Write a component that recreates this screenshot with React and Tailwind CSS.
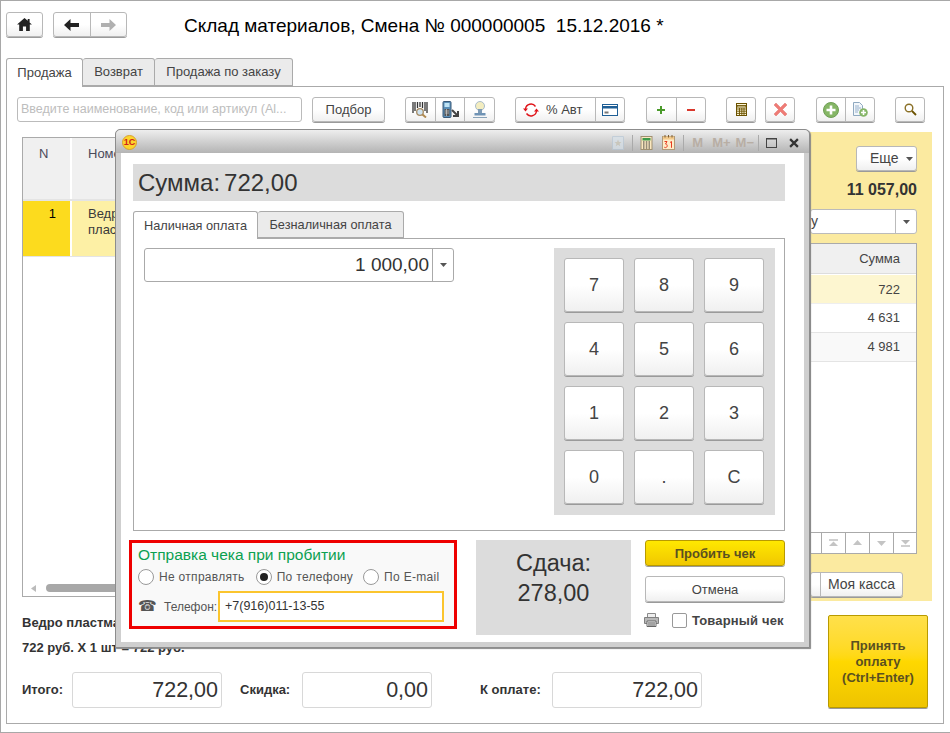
import React from "react";

const btn = "flex items-center justify-center box-border border border-[#b8b8b8] rounded-[3px] bg-linear-to-b from-white from-50% to-[#f0f0f0] shadow-[0_1px_0_#9a9a9a] text-[13px] text-[#444]";

const Sep = () => <div className="w-px self-stretch bg-[#b8b8b8]" />;
const Cell = ({ className = "", children }) => <div className={"flex items-center justify-center h-full " + className}>{children}</div>;

const Caret = () => (
  <svg width="7" height="4" viewBox="0 0 7 4"><path d="M0 0h7L3.500 4z" fill="#555" /></svg>
);

const HomeI = () => (
  <svg width="15" height="13" viewBox="0 0 16 14"><path d="M8 0 0 7h2.300v7h4V9.200h3.400V14h4V7H16l-2.500-2.200V1h-2v2L8 0z" fill="#222" /></svg>
);
const ArrowL = ({ c }) => (
  <svg width="15" height="12" viewBox="0 0 15 12"><path d="M6.500 0 0 6l6.500 6V8H15V4H6.500z" fill={c} /></svg>
);
const ArrowR = ({ c }) => (
  <svg width="15" height="12" viewBox="0 0 15 12"><path d="M8.500 0 15 6l-6.500 6V8H0V4h8.500z" fill={c} /></svg>
);
const BarcodeI = () => (
  <svg width="16" height="16" viewBox="0 0 16 16">
    <path d="M1 0v11M3 0v9M5.500 0v6M8 0v5M10.500 0v6M13 0v9M15 0v11" stroke="#333" strokeWidth="1.300" fill="none" />
    <circle cx="8" cy="10" r="3.300" fill="#cfe3f0" stroke="#a58a62" strokeWidth="1.300" />
    <path d="M10.500 12.500 14 15.500" stroke="#b08a50" strokeWidth="2" />
  </svg>
);
const TermI = () => (
  <svg width="17" height="18" viewBox="0 0 17 18">
    <rect x="1" y="0.500" width="8" height="16" rx="1" fill="#5b8fb8" stroke="#3a5a78" />
    <rect x="2.500" y="2" width="5" height="4" fill="#bfe4f5" />
    <path d="M2.500 8h5v7h-5z" fill="#555" />
    <path d="M3 10h4M3 12h4M4.500 8v7" stroke="#ddd" strokeWidth="0.600" />
    <path d="M10 9l5 5M16 10v5h-5" stroke="#444" strokeWidth="2" fill="none" />
  </svg>
);
const StampI = () => (
  <svg width="16" height="18" viewBox="0 0 16 18">
    <circle cx="8" cy="5" r="4.500" fill="#f3edc0" stroke="#a9bccb" />
    <path d="M6 8h4v4H6z" fill="#7d9ab5" />
    <path d="M2.500 12h11v2.500h-11z" fill="#6f93b5" />
    <path d="M1 16.500h14" stroke="#88a2b8" />
  </svg>
);
const RecycleI = () => (
  <svg width="16" height="14" viewBox="0 0 16 14" fill="none">
    <path d="M2.500 6A5.500 5.500 0 0 1 12.500 3.500" stroke="#e0141a" strokeWidth="1.400" />
    <path d="M13.500 8A5.500 5.500 0 0 1 3.500 10.500" stroke="#e0141a" strokeWidth="1.400" />
    <path d="M0 5.500h5L2.500 8.500zM16 8.500h-5L13.500 5.500z" fill="#e0141a" />
  </svg>
);
const CardI = () => (
  <svg width="16" height="12" viewBox="0 0 16 12">
    <rect x="0.500" y="0.500" width="15" height="11" fill="#fff" stroke="#1f5f96" />
    <rect x="1" y="2" width="14" height="2.500" fill="#1f5f96" />
    <path d="M2.500 7.500h4v2h-4z" fill="#777" />
  </svg>
);
const PlusI = () => (
  <svg width="8" height="8" viewBox="0 0 8 8"><path d="M3 0h2v3h3v2H5v3H3V5H0V3h3z" fill="#4a9a2a" /></svg>
);
const MinusI = () => (
  <svg width="8" height="2" viewBox="0 0 8 2"><path d="M0 0h8v2H0z" fill="#d9372c" /></svg>
);
const CalcI = () => (
  <svg width="11" height="13" viewBox="0 0 11 13">
    <rect x="0.500" y="0.500" width="10" height="12" fill="#fdf6d8" stroke="#6b5200" />
    <path d="M1 2.500h9v1.500H1zM1 6h9M1 8.200h9M1 10.400h9M3.500 5v7M5.800 5v7M8 5v7" stroke="#6b5200" strokeWidth="0.900" fill="none" />
  </svg>
);
const XI = () => (
  <svg width="13" height="13" viewBox="0 0 13 13"><path d="M2 0l4.500 4.500L11 0l2 2-4.500 4.500L13 11l-2 2-4.500-4.500L2 13l-2-2 4.500-4.500L0 2z" fill="#ef7b75" stroke="#d8605a" strokeWidth="0.400" /></svg>
);
const CircPlusI = () => (
  <svg width="16" height="16" viewBox="0 0 16 16">
    <circle cx="8" cy="8" r="7.500" fill="#85b665" stroke="#6f9f55" />
    <path d="M6.700 3.500h2.600v3.200h3.200v2.600H9.300v3.200H6.700V9.300H3.500V6.700h3.200z" fill="#fff" />
  </svg>
);
const DocPlusI = () => (
  <svg width="15" height="15" viewBox="0 0 15 15">
    <path d="M0.500 0.500h6l3 3v10h-9z" fill="#f3f7fb" stroke="#8fa9c0" />
    <path d="M2 4h4M2 6h6M2 8h4M2 10h3" stroke="#7f9fc0" strokeWidth="0.800" />
    <circle cx="10.500" cy="10.500" r="4.300" fill="#86b668" />
    <path d="M9.700 8h1.600v1.700H13v1.600h-1.700V13H9.700v-1.700H8V9.700h1.700z" fill="#fff" />
  </svg>
);
const SearchI = () => (
  <svg width="13" height="13" viewBox="0 0 13 13" fill="none">
    <circle cx="5" cy="5" r="3.800" stroke="#8a7026" strokeWidth="1.400" fill="#fff" />
    <path d="M8 8l4 4" stroke="#6b5200" strokeWidth="1.800" />
  </svg>
);
const StarDocI = () => (
  <svg width="12" height="14" viewBox="0 0 12 14" className="opacity-70">
    <path d="M0.500 0.500h11v13h-11z" fill="#d8e2ea" stroke="#b8c8d6" />
    <path d="M6 3.500l1 2.500h2.500L7.500 7.700l.8 2.500L6 8.800l-2.300 1.400.8-2.500L2.500 6H5z" fill="#c8c4b4" />
  </svg>
);
const CalcColorI = () => (
  <svg width="13" height="14" viewBox="0 0 12 14">
    <rect x="0.500" y="0.500" width="11" height="13" fill="#fbe8c0" stroke="#a09070" />
    <rect x="2" y="2" width="8" height="2.500" fill="#3e9a4a" />
    <path d="M2.500 6h1.500M5.300 6h1.500M8 6h1.500M2.500 8h1.500M5.300 8h1.500M8 8h1.500M2.500 10h1.500M5.300 10h1.500M8 10h1.500M2.500 12h1.500M5.300 12h1.500M8 12h1.500" stroke="#333" strokeWidth="1" />
  </svg>
);
const CalDateI = () => (
  <svg width="13" height="15" viewBox="0 0 13 15">
    <rect x="0.500" y="1.500" width="12" height="13" fill="#fdecc8" stroke="#b09a78" />
    <path d="M1 1.500h11v3H1z" fill="#f2c98a" />
    <path d="M3 0v2.500M6.500 0v2.500M10 0v2.500" stroke="#7a5a30" />
    <path d="M2.500 6.500H5L3.500 9c1.300 0 1.700.8 1.700 1.800 0 1-.7 1.800-1.700 1.800-.6 0-1-.2-1.300-.5M8 7.500l1.500-1v6.300" stroke="#e83a20" fill="none" strokeWidth="1" />
  </svg>
);
const MaxI = () => (
  <svg width="11" height="10" viewBox="0 0 11 10"><rect x="0.500" y="0.500" width="10" height="9" fill="none" stroke="#444" /><path d="M0 0.500h11" stroke="#444" strokeWidth="2" /></svg>
);
const CloseI = () => (
  <svg width="10" height="10" viewBox="0 0 9 9"><path d="M1 1l7 7M8 1l-7 7" stroke="#333" strokeWidth="2" /></svg>
);
const Tri = ({ down, bar }) => (
  <svg width="11" height="8" viewBox="0 0 11 8">
    {bar && <path d={down ? "M1 7h9" : "M1 1h9"} stroke="#c4c4c4" strokeWidth="1.600" />}
    <path d={down ? (bar ? "M1 1h9L5.500 5.500z" : "M1 2h9L5.500 7z") : (bar ? "M1 7h9L5.500 2.500z" : "M1 6h9L5.500 1z")} fill="#c4c4c4" />
  </svg>
);
const PrinterI = () => (
  <svg width="15" height="14" viewBox="0 0 15 14">
    <path d="M3.500 0.500h8v4h-8z" fill="#eee" stroke="#8a8a8a" />
    <path d="M0.500 4.500h14v6h-14z" fill="#b8b8b8" stroke="#808080" />
    <path d="M3 8h9v5.500H3z" fill="#fff" stroke="#666" />
    <path d="M4 10h7M4 12h7" stroke="#333" strokeWidth="0.900" />
  </svg>
);

const Radio = ({ on, label, className = "" }) => (
  <div className={"flex items-center gap-[5px] " + className}>
    <div className="flex items-center justify-center w-[16px] h-[16px] box-border rounded-full border border-[#999] bg-white">
      {on && <div className="w-[8px] h-[8px] rounded-full bg-[#222]" />}
    </div>
    <span className="text-[12px] text-[#555] tracking-[0.3px] whitespace-nowrap">{label}</span>
  </div>
);

const Field = ({ className = "", children }) => (
  <div className={"flex items-center justify-end box-border h-[36px] border border-[#d8d8d8] rounded-[3px] bg-white pr-[3px] text-[21.500px] font-normal text-[#333] " + className}>{children}</div>
);

const Key = ({ children }) => (
  <div className={btn + " !text-[18px] rounded-[3px]"}>{children}</div>
);

export default function App() {
  return (
    <div className="relative box-border w-[950px] h-[733px] overflow-hidden bg-white border-t border-l border-b border-[#a8a8a8] font-['Liberation_Sans',Arial,sans-serif]">
      {/* header */}
      <div className="flex items-start h-[57px] pl-[5px] pt-[11px]">
        <div className={btn + " w-[37px] h-[25px]"}><HomeI /></div>
        <div className={btn + " w-[74px] h-[25px] ml-[10px]"}>
          <Cell className="flex-1"><ArrowL c="#222" /></Cell>
          <Sep />
          <Cell className="flex-1"><ArrowR c="#b0b0b0" /></Cell>
        </div>
        <div className="ml-[57px] text-[19px] leading-[28px] text-black whitespace-pre">Склад материалов, Смена № 000000005  15.12.2016 *</div>
      </div>

      {/* tabs */}
      <div className="relative z-10 flex h-[29px] pl-[5px] -mb-px text-[13px] text-[#444]">
        <div className="flex items-center justify-center w-[77px] h-[29px] box-border border border-b-0 border-[#aaa] rounded-t-[3px] bg-white">Продажа</div>
        <div className="flex items-center justify-center w-[72px] h-[28px] box-border border border-l-0 border-[#aaa] rounded-t-[3px] bg-[#ebebeb]">Возврат</div>
        <div className="flex items-center justify-center w-[138px] h-[28px] box-border border border-l-0 border-[#aaa] rounded-t-[3px] bg-[#ebebeb]">Продажа по заказу</div>
      </div>

      {/* main panel */}
      <div className="ml-[5px] box-border w-[938px] h-[638px] border border-[#aaa] bg-white">
        {/* toolbar */}
        <div className="flex h-[25px] mt-[10px] ml-[10px]">
          <div className="flex items-center box-border w-[285px] h-[25px] border border-[#bbb] rounded-[3px] bg-white pl-[3px] text-[12.500px] text-[#bdbdbd] whitespace-nowrap">Введите наименование, код или артикул (Al...</div>
          <div className={btn + " w-[73px] h-[25px] ml-[10px]"}>Подбор</div>
          <div className={btn + " w-[90px] h-[25px] ml-[20px]"}>
            <Cell className="flex-1"><BarcodeI /></Cell><Sep />
            <Cell className="flex-1"><TermI /></Cell><Sep />
            <Cell className="flex-1"><StampI /></Cell>
          </div>
          <div className={btn + " w-[110px] h-[25px] ml-[20px]"}>
            <Cell className="w-[79px] !justify-start pl-[7px] gap-[7px]"><RecycleI /><span className="text-[#444]">% Авт</span></Cell><Sep />
            <Cell className="flex-1"><CardI /></Cell>
          </div>
          <div className={btn + " w-[60px] h-[25px] ml-[21px]"}>
            <Cell className="flex-1"><PlusI /></Cell><Sep />
            <Cell className="flex-1"><MinusI /></Cell>
          </div>
          <div className={btn + " w-[30px] h-[25px] ml-[20px]"}><CalcI /></div>
          <div className={btn + " w-[30px] h-[25px] ml-[9px]"}><XI /></div>
          <div className={btn + " w-[59px] h-[25px] ml-[21px]"}>
            <Cell className="flex-1"><CircPlusI /></Cell><Sep />
            <Cell className="flex-1"><DocPlusI /></Cell>
          </div>
          <div className={btn + " w-[30px] h-[25px] ml-[20px]"}><SearchI /></div>
        </div>

        {/* work area */}
        <div className="flex h-[469px] mt-[10px]">
          {/* left table */}
          <div className="flex flex-col box-border w-[778px] h-[460px] ml-[15px] mt-[5px] border border-[#aaa] text-[13px] text-[#4a4a5a]">
            <div className="flex h-[63px] bg-[#f0f0f0] border-b-2 border-[#e4e4e4]">
              <div className="w-[49px] pt-[6px] pl-[16px] border-r-2 border-white">N</div>
              <div className="flex-1 pt-[6px] pl-[16px]">Номенклатура</div>
            </div>
            <div className="flex h-[56px] border-b border-[#e4e4e4] bg-[#fdf0a5] text-[#3a3a3a] leading-[16px]">
              <div className="w-[49px] pt-[5px] pr-[14px] text-right bg-[#fcdb1e] text-black border-r-2 border-white">1</div>
              <div className="flex-1 pt-[5px] pl-[16px]">Ведро<br />пластм</div>
            </div>
            <div className="flex-1" />
            <div className="flex items-center h-[16px] pl-[8px]">
              <svg width="5" height="7" viewBox="0 0 5 7"><path d="M5 0v7L0 3.500z" fill="#bbb" /></svg>
              <div className="w-[400px] h-[8px] ml-[10px] mb-[1px] rounded-full bg-[#a8a8a8]" />
            </div>
          </div>

          {/* yellow panel */}
          <div className="flex flex-col items-end box-border w-[127px] h-[469px] ml-[5px] pt-[14px] pr-[15px] bg-[#fbeaa0]">
            <div className={btn + " w-[61px] h-[25px] !justify-start pl-[13px] gap-[7px] !text-[14px]"}>Еще <Caret /></div>
            <div className="mt-[10px] h-[18px] text-[16px] leading-[18px] font-bold text-[#333]">11 057,00</div>
            <div className="flex items-center box-border w-[107px] h-[25px] mt-[10px] border border-[#bbb] rounded-[3px] bg-white text-[14px] text-[#444]">
              <span className="flex-1 leading-[23px]">у</span>
              <div className="flex items-center justify-center w-[21px] h-full border-l border-[#bbb]"><Caret /></div>
            </div>
            <div className="flex flex-col box-border w-[107px] h-[311px] mt-[9px] border border-[#aaa] bg-white text-[13px] text-[#444]">
              <div className="flex items-center justify-end h-[30px] pr-[16px] bg-[#f0f0f0] border-b border-[#ddd]">Сумма</div>
              <div className="flex items-center justify-end h-[29px] mt-px pt-px pr-[16px] bg-[#fdf6d0] border-b border-[#eee]">722</div>
              <div className="flex items-center justify-end h-[29px] pr-[16px] border-b border-[#e4e4e4]">4 631</div>
              <div className="flex items-center justify-end h-[29px] pr-[16px] bg-[#f9f9f9] border-b border-[#e4e4e4]">4 981</div>
              <div className="flex-1" />
              <div className="flex h-[21px] pl-[10px] border-t border-[#aaa]">
                <div className="flex items-center justify-center w-[24px] border-l border-[#aaa]"><Tri bar /></div>
                <div className="flex items-center justify-center w-[24px] border-l border-[#aaa]"><Tri /></div>
                <div className="flex items-center justify-center w-[24px] border-l border-[#aaa]"><Tri down /></div>
                <div className="flex items-center justify-center flex-1 border-l border-[#aaa]"><Tri down bar /></div>
              </div>
            </div>
            <div className={btn + " w-[93px] h-[25px] mt-[18px] mr-[14px] !justify-start !text-[14px]"}>
              <div className="w-[9px]" /><Sep />
              <span className="flex-1 text-center">Моя касса</span>
            </div>
          </div>
        </div>

        {/* bottom */}
        <div className="flex mt-[14px]">
          <div className="flex-1 ml-[15px] text-[13px] font-bold text-[#333]">
            <div className="h-[16px] leading-[16px] whitespace-nowrap">Ведро пластмассовое</div>
            <div className="h-[16px] leading-[16px] mt-[9px] whitespace-nowrap">722 руб. X 1 шт = 722 руб.</div>
            <div className="flex items-center mt-[16px]">
              <div className="w-[50px]">Итого:</div>
              <Field className="w-[150px]">722,00</Field>
              <div className="w-[62px] ml-[18px]">Скидка:</div>
              <Field className="w-[130px]">0,00</Field>
              <div className="w-[72px] ml-[48px]">К оплате:</div>
              <Field className="w-[150px]">722,00</Field>
            </div>
          </div>
          <div className="flex items-center justify-center box-border w-[100px] h-[93px] mr-[15px] border border-[#b89a00] rounded-[2px] bg-linear-to-b from-[#ffe04a] via-[#ffd800] to-[#eec400] shadow-[0_1px_0_#9a9a9a] text-center text-[13px] leading-[16px] font-bold text-[#5a5020]">
            <span>Принять<br />оплату<br />(Ctrl+Enter)</span>
          </div>
        </div>
      </div>

      {/* modal window */}
      <div className="absolute z-20 left-[114px] top-[128px] flex flex-col box-border w-[695px] h-[519px] border border-[#8c8c8c] rounded-t-[5px] bg-[#cfcfcf] shadow-[1px_1px_1px_#888]">
        <div className="flex items-center h-[23px] pl-[6px] pr-[10px] rounded-t-[5px] bg-linear-to-b from-[#eeeeee] to-[#b4b4b4]">
          <div className="flex items-center justify-center w-[15px] h-[15px] mt-[2px] rounded-full bg-[#fcd52c] border border-[#d8a030] text-[9px] leading-none font-bold text-[#d0201a]">1С</div>
          <div className="flex-1" />
          <div className="flex items-center mt-[2px]">
            <StarDocI />
            <div className="w-px h-[16px] ml-[8px] mr-[7px] bg-[#aaa]" />
            <CalcColorI />
            <div className="w-[9px]" />
            <CalDateI />
            <div className="w-px h-[16px] ml-[8px] mr-[8px] bg-[#aaa]" />
            <span className="text-[13px] font-bold text-[#b8aea4]">M</span>
            <span className="ml-[9px] text-[13px] font-bold text-[#b8aea4]">M+</span>
            <span className="ml-[5px] text-[13px] font-bold text-[#b8aea4]">M−</span>
            <div className="w-px h-[16px] ml-[4px] mr-[7px] bg-[#aaa]" />
            <MaxI />
            <div className="w-[12px]" />
            <CloseI />
          </div>
        </div>

        <div className="flex-1 mx-[5px] mb-[5px] pt-[11px] pl-[12px] bg-white">
          <div className="flex items-center w-[652px] h-[37px] pl-[5px] gap-[4px] bg-[#dcdcdc] text-[24px] text-[#333]">
            <span>Сумма:</span><span>722,00</span>
          </div>

          <div className="relative z-10 flex h-[28px] mt-[10px] -mb-px text-[12.750px] text-[#444]">
            <div className="flex items-center justify-center w-[125px] h-[28px] box-border border border-b-0 border-[#aaa] rounded-t-[3px] bg-white">Наличная оплата</div>
            <div className="flex items-center justify-center w-[146px] h-[27px] box-border border border-l-0 border-[#aaa] rounded-t-[3px] bg-[#ebebeb]">Безналичная оплата</div>
          </div>

          <div className="flex justify-between box-border w-[652px] h-[293px] border border-[#aaa] pt-[9px] pl-[10px] pr-[9px]">
            <div className="flex box-border w-[310px] h-[34px] border border-[#aaa] rounded-[3px] bg-white text-[19px] text-[#333]">
              <div className="flex flex-1 items-center justify-end pr-[3px]">1 000,00</div>
              <div className="flex items-center justify-center w-[21px] border-l border-[#aaa]"><Caret /></div>
            </div>
            <div className="grid grid-cols-[60px_60px_60px] grid-rows-[54px_54px_54px_54px] gap-[10px] box-border w-[221px] h-[267px] p-[10px] bg-[#dcdcdc]">
              {["7", "8", "9", "4", "5", "6", "1", "2", "3", "0", ".", "C"].map((k) => <Key key={k}>{k}</Key>)}
            </div>
          </div>

          <div className="flex mt-[9px]">
            <div className="box-border w-[328px] h-[89px] -ml-[4px] border-[3px] border-[#ee0000] bg-[#f9f9f9] pl-[6px]">
              <div className="h-[23px] pt-[1px] leading-[22px] text-[15.500px] text-[#0aa050] whitespace-nowrap">Отправка чека при пробитии</div>
              <div className="flex items-center h-[22px]">
                <Radio label="Не отправлять" />
                <Radio on label="По телефону" className="ml-[11px]" />
                <Radio label="По E-mail" className="ml-[10px]" />
              </div>
              <div className="flex items-center h-[31px] mt-[3px]">
                <span className="w-[26px] font-['DejaVu_Sans',sans-serif] text-[15px] leading-none text-[#555]">☎</span>
                <span className="w-[54px] text-[12px] text-[#555] whitespace-nowrap">Телефон:</span>
                <div className="flex items-center box-border w-[226px] h-[31px] border-2 border-[#fbc52e] bg-white pl-[5px] text-[12.500px] text-[#333]">+7(916)011-13-55</div>
              </div>
            </div>

            <div className="flex flex-col items-center box-border w-[155px] h-[95px] ml-[19px] pt-[8px] bg-[#dcdcdc] text-[23.500px] leading-[30px] text-[#333]">
              <span>Сдача:</span>
              <span>278,00</span>
            </div>

            <div className="flex flex-col w-[140px] ml-[14px]">
              <div className="flex items-center justify-center box-border h-[26px] pt-px border border-[#b89a00] rounded-[3px] bg-linear-to-b from-[#ffe800] to-[#f0c800] shadow-[0_1px_0_#9a9a9a] text-[13px] font-bold text-[#5a5020]">Пробить чек</div>
              <div className={btn + " h-[26px] pt-px mt-[10px]"}>Отмена</div>
              <div className="flex items-center h-[16px] mt-[10px] -ml-[1px]">
                <PrinterI />
                <div className="box-border w-[15px] h-[15px] ml-[13px] border border-[#999] rounded-[2px] bg-white" />
                <span className="ml-[5px] mt-[2px] text-[13px] font-bold tracking-[0.15px] text-[#444] whitespace-nowrap">Товарный чек</span>
              </div>
            </div>
          </div>
        </div>
      </div>
    </div>
  );
}
